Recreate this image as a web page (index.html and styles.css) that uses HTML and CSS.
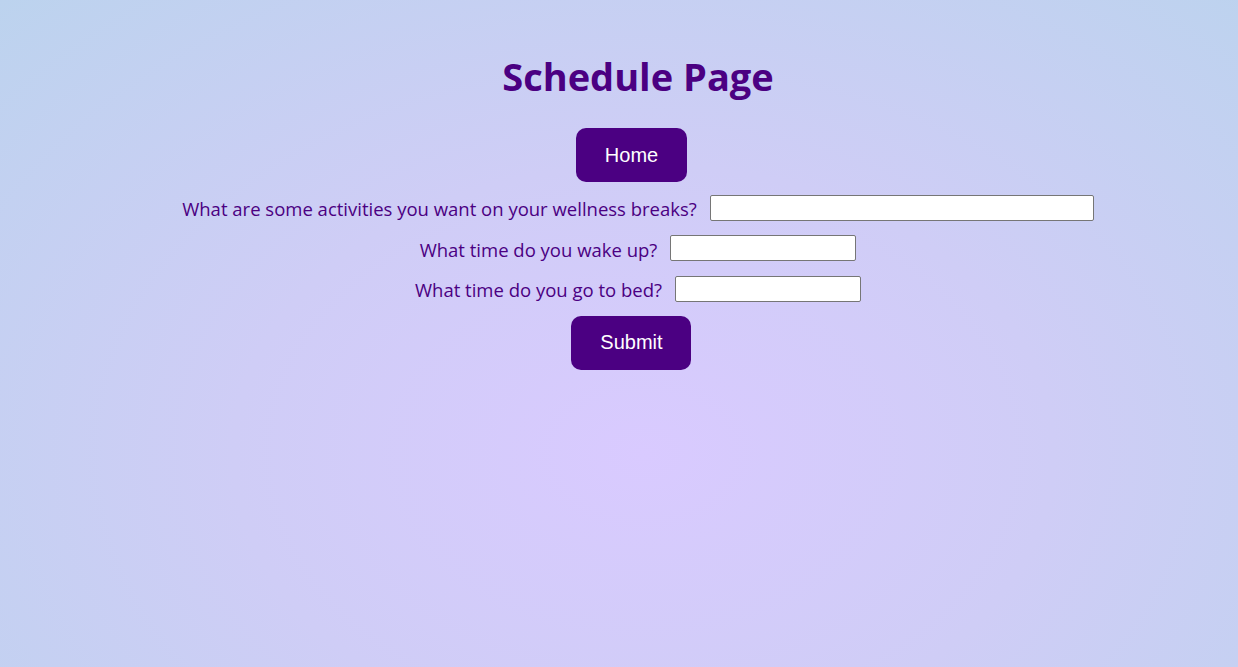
FILE: index.html
```html
<!DOCTYPE html>
<html>
<head>
<meta charset="utf-8">
<link rel="stylesheet" href="styles.css">
</head>
<body>
<main class="page">
  <h1 class="title">Schedule Page</h1>
  <button class="btn btn-home">Home</button>
  <form class="form">
    <div class="row">
      <label class="label">What are some activities you want on your wellness breaks?</label>
      <input class="field field-wide" type="text">
    </div>
    <div class="row">
      <label class="label">What time do you wake up?</label>
      <input class="field" type="text">
    </div>
    <div class="row">
      <label class="label">What time do you go to bed?</label>
      <input class="field" type="text">
    </div>
    <button class="btn btn-submit" type="button">Submit</button>
  </form>
</main>
</body>
</html>
```
FILE: styles.css
```css
html, body {
  margin: 0;
  height: 100%;
}
body {
  background: radial-gradient(ellipse at 52% 68%, #d9caff 0%, #cfcdf6 45%, #bcd3ee 100%);
  font-family: "Open Sans", "Noto Sans", sans-serif;
  color: #4b0082;
}
.page {
  display: flex;
  flex-direction: column;
  align-items: center;
  padding-left: 38px;
  padding-top: 51px;
}
.title {
  margin: 0;
  font-size: 38px;
  line-height: 50px;
  font-weight: 700;
  color: #4b0082;
}
.btn {
  background: #4b0082;
  color: #fff;
  border: none;
  border-radius: 10px;
  font-family: "Liberation Sans", Arial, sans-serif;
  font-size: 20px;
  line-height: 20px;
  height: 54px;
  padding: 0 0 1px;
  margin-right: 13px;
}
.btn-home {
  margin-top: 27px;
  width: 111px;
}
.btn-submit {
  width: 120px;
}
.form {
  display: flex;
  flex-direction: column;
  align-items: center;
  margin-top: 12px;
  gap: 13.5px;
}
.row {
  display: flex;
  align-items: center;
  gap: 13px;
  height: 27px;
}
.label {
  font-size: 18.5px;
  padding-top: 2px;
}
.field {
  width: 186px;
  height: 26px;
  box-sizing: border-box;
  border: 1px solid #767676;
  border-radius: 2px;
  background: #fff;
  padding: 0 4px;
}
.field-wide {
  width: 384px;
}
```
